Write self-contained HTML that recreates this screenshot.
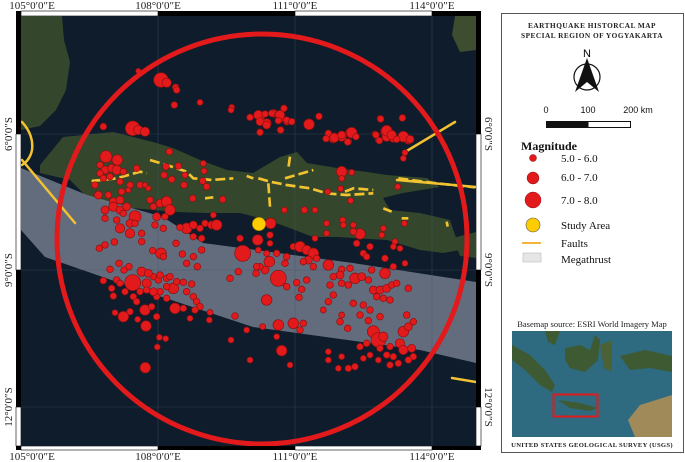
<!DOCTYPE html>
<html><head><meta charset="utf-8"><style>
body{margin:0;width:685px;height:462px;background:#fff;overflow:hidden;font-family:"Liberation Serif",serif}
svg{position:absolute;left:0;top:0}
</style></head><body>
<svg width="685" height="462" viewBox="0 0 685 462" xmlns="http://www.w3.org/2000/svg" font-family="Liberation Serif, serif">
<defs><clipPath id="mc"><rect x="21" y="16" width="455" height="430"/></clipPath></defs>
<rect x="16" y="11" width="465" height="439" fill="#000"/>
<rect x="21" y="11" width="137" height="5" fill="#fff" stroke="#000" stroke-width="0.6"/>
<rect x="295" y="11" width="137" height="5" fill="#fff" stroke="#000" stroke-width="0.6"/>
<rect x="21" y="446" width="137" height="4" fill="#fff" stroke="#000" stroke-width="0.6"/>
<rect x="295" y="446" width="137" height="4" fill="#fff" stroke="#000" stroke-width="0.6"/>
<rect x="16" y="134" width="5" height="136" fill="#fff" stroke="#000" stroke-width="0.6"/>
<rect x="16" y="407" width="5" height="39" fill="#fff" stroke="#000" stroke-width="0.6"/>
<rect x="476" y="134" width="5" height="136" fill="#fff" stroke="#000" stroke-width="0.6"/>
<rect x="476" y="407" width="5" height="39" fill="#fff" stroke="#000" stroke-width="0.6"/>
<g clip-path="url(#mc)">
<rect x="21" y="16" width="455" height="430" fill="#0e1c2b"/>
<polygon fill="#34462b" points="21,16 62,16 64,40 70,62 66,90 56,110 40,126 21,130"/>
<polygon fill="#3e4d30" points="455,16 476,16 476,50 460,52 452,35"/>
<polygon fill="#34462b" points="40,165 63,137 113,132 153,142 173,148 200,160 227,170 253,173 280,157 297,152 307,163 337,168 367,172 387,175 427,178 440,187 403,193 383,198 390,210 420,213 450,220 460,250 443,253 420,250 387,240 337,237 313,237 287,227 267,220 240,213 207,213 177,212 153,210 120,207 87,197 70,180 40,173"/>
<polygon fill="#34462b" points="453,238 476,232 476,258 460,256"/>
<polygon fill="#6c7686" fill-opacity="0.9" points="21,168 87,195 163,217 203,243 353,263 476,282 476,363 420,350 253,327 120,283 45,257 21,230"/>
<g stroke="#44576a" stroke-width="0.6" opacity="0.6">
<line x1="158" y1="16" x2="158" y2="446"/><line x1="295" y1="16" x2="295" y2="446"/><line x1="432" y1="16" x2="432" y2="446"/>
<line x1="21" y1="134" x2="476" y2="134"/><line x1="21" y1="270" x2="476" y2="270"/><line x1="21" y1="407" x2="476" y2="407"/>
</g>
<g stroke="#f2c230" stroke-width="2.5" fill="none" stroke-linecap="round">
<path d="M22,122 Q34,135 32,150 Q30,160 22,165"/>
<path d="M22,160 L75,223"/>
<path d="M397,180 L476,187"/>
<path d="M405,152 L455,122"/>
<path d="M452,378 L476,382"/>
</g>
<g transform="translate(20,110) scale(0.33333)">
<g stroke="#f2c230" stroke-width="8" fill="none" stroke-dasharray="30,12">
<polyline points="215,213 290,205 360,185 380,190"/>
<polyline points="390,150 440,165 500,185 520,205 575,210 640,205"/>
<polyline points="555,265 580,262"/><polyline points="680,198 700,205"/>
<polyline points="715,205 750,215 800,225 870,235 920,250 980,255 1060,250"/>
<polyline points="745,220 750,290"/><polyline points="795,205 880,180"/><polyline points="810,140 805,175"/>
<polyline points="975,245 1000,235 1060,240"/><polyline points="1135,205 1250,220 1365,232"/>
<polyline points="1090,295 1115,305"/><polyline points="1145,325 1165,325"/><polyline points="1280,335 1283,350"/>
</g>
<g fill="#e31a1c" stroke="#8a1010" stroke-width="2">
<circle cx="258" cy="140" r="18"/><circle cx="292" cy="150" r="16"/><circle cx="240" cy="165" r="10"/><circle cx="255" cy="180" r="12"/><circle cx="275" cy="175" r="12"/><circle cx="290" cy="180" r="14"/><circle cx="310" cy="185" r="10"/><circle cx="240" cy="190" r="10"/><circle cx="270" cy="200" r="10"/><circle cx="225" cy="225" r="10"/><circle cx="250" cy="205" r="10"/><circle cx="300" cy="215" r="10"/><circle cx="330" cy="225" r="10"/><circle cx="350" cy="175" r="10"/><circle cx="360" cy="225" r="10"/><circle cx="375" cy="225" r="8"/><circle cx="385" cy="235" r="8"/><circle cx="305" cy="245" r="10"/><circle cx="325" cy="240" r="8"/><circle cx="235" cy="255" r="12"/><circle cx="265" cy="255" r="10"/><circle cx="280" cy="275" r="12"/><circle cx="300" cy="270" r="12"/><circle cx="255" cy="300" r="12"/><circle cx="280" cy="290" r="14"/><circle cx="300" cy="300" r="12"/><circle cx="320" cy="290" r="12"/><circle cx="345" cy="320" r="18"/><circle cx="310" cy="310" r="10"/><circle cx="255" cy="325" r="10"/><circle cx="290" cy="330" r="10"/><circle cx="330" cy="340" r="12"/><circle cx="300" cy="355" r="14"/><circle cx="330" cy="370" r="14"/><circle cx="345" cy="340" r="10"/><circle cx="365" cy="370" r="10"/><circle cx="400" cy="290" r="10"/><circle cx="420" cy="280" r="12"/><circle cx="440" cy="275" r="16"/><circle cx="450" cy="300" r="16"/><circle cx="435" cy="320" r="10"/><circle cx="410" cy="320" r="12"/><circle cx="405" cy="345" r="10"/><circle cx="430" cy="355" r="10"/><circle cx="390" cy="270" r="10"/><circle cx="448" cy="125" r="10"/><circle cx="475" cy="168" r="10"/><circle cx="438" cy="170" r="10"/><circle cx="550" cy="160" r="9"/><circle cx="552" cy="183" r="9"/><circle cx="432" cy="195" r="10"/><circle cx="455" cy="208" r="10"/><circle cx="495" cy="195" r="9"/><circle cx="492" cy="225" r="10"/><circle cx="548" cy="213" r="10"/><circle cx="560" cy="230" r="10"/><circle cx="518" cy="265" r="10"/><circle cx="608" cy="268" r="10"/><circle cx="500" cy="355" r="16"/><circle cx="520" cy="345" r="12"/><circle cx="540" cy="355" r="10"/><circle cx="555" cy="340" r="10"/><circle cx="545" cy="385" r="10"/><circle cx="575" cy="345" r="12"/><circle cx="580" cy="315" r="9"/><circle cx="590" cy="345" r="16"/><circle cx="480" cy="352" r="10"/><circle cx="520" cy="380" r="10"/>
<circle cx="752" cy="340" r="16"/><circle cx="713" cy="390" r="16"/><circle cx="750" cy="375" r="10"/><circle cx="660" cy="385" r="10"/><circle cx="668" cy="430" r="24"/><circle cx="715" cy="420" r="9"/><circle cx="740" cy="430" r="9"/><circle cx="748" cy="455" r="16"/><circle cx="735" cy="480" r="12"/><circle cx="775" cy="505" r="24"/><circle cx="800" cy="530" r="10"/><circle cx="795" cy="460" r="10"/><circle cx="770" cy="430" r="10"/><circle cx="800" cy="440" r="10"/><circle cx="820" cy="410" r="10"/><circle cx="840" cy="410" r="16"/><circle cx="860" cy="420" r="14"/><circle cx="880" cy="430" r="16"/><circle cx="865" cy="450" r="12"/><circle cx="890" cy="445" r="10"/><circle cx="850" cy="455" r="10"/><circle cx="925" cy="465" r="16"/><circle cx="880" cy="470" r="10"/><circle cx="885" cy="385" r="9"/><circle cx="920" cy="370" r="9"/><circle cx="920" cy="340" r="9"/><circle cx="968" cy="330" r="9"/><circle cx="970" cy="345" r="9"/><circle cx="1000" cy="345" r="9"/><circle cx="1020" cy="372" r="16"/><circle cx="1000" cy="365" r="10"/><circle cx="1010" cy="400" r="10"/><circle cx="1050" cy="410" r="10"/><circle cx="1030" cy="430" r="10"/><circle cx="1040" cy="440" r="10"/><circle cx="1090" cy="355" r="9"/><circle cx="1085" cy="375" r="9"/><circle cx="1125" cy="395" r="9"/><circle cx="1120" cy="410" r="9"/><circle cx="1140" cy="415" r="9"/><circle cx="1095" cy="445" r="10"/><circle cx="1095" cy="490" r="16"/><circle cx="1120" cy="470" r="10"/><circle cx="1155" cy="460" r="9"/><circle cx="1005" cy="505" r="16"/><circle cx="1025" cy="500" r="12"/><circle cx="1045" cy="510" r="10"/><circle cx="1055" cy="480" r="10"/><circle cx="990" cy="475" r="10"/><circle cx="965" cy="478" r="10"/><circle cx="960" cy="495" r="12"/><circle cx="940" cy="500" r="10"/><circle cx="930" cy="525" r="10"/><circle cx="965" cy="520" r="10"/><circle cx="985" cy="525" r="10"/><circle cx="1060" cy="540" r="12"/><circle cx="1080" cy="540" r="12"/><circle cx="1100" cy="535" r="12"/><circle cx="1115" cy="525" r="10"/><circle cx="1070" cy="560" r="10"/><circle cx="1090" cy="565" r="10"/><circle cx="1110" cy="570" r="10"/><circle cx="1130" cy="520" r="10"/><circle cx="1165" cy="535" r="10"/><circle cx="1030" cy="585" r="10"/><circle cx="1050" cy="600" r="10"/><circle cx="1080" cy="620" r="10"/><circle cx="1020" cy="615" r="10"/><circle cx="1000" cy="580" r="10"/><circle cx="965" cy="615" r="9"/><circle cx="960" cy="635" r="10"/><circle cx="940" cy="555" r="10"/><circle cx="925" cy="575" r="10"/><circle cx="910" cy="600" r="9"/><circle cx="983" cy="655" r="10"/><circle cx="1045" cy="632" r="10"/><circle cx="1060" cy="665" r="18"/><circle cx="1075" cy="690" r="22"/><circle cx="1090" cy="680" r="14"/><circle cx="1040" cy="700" r="10"/><circle cx="1020" cy="710" r="10"/><circle cx="1080" cy="715" r="10"/><circle cx="1050" cy="735" r="9"/><circle cx="1030" cy="745" r="9"/><circle cx="1075" cy="750" r="9"/><circle cx="1100" cy="735" r="10"/><circle cx="1110" cy="710" r="10"/><circle cx="1150" cy="665" r="16"/><circle cx="1165" cy="650" r="12"/><circle cx="1160" cy="615" r="10"/><circle cx="1180" cy="635" r="10"/><circle cx="1140" cy="700" r="14"/><circle cx="1150" cy="720" r="14"/><circle cx="1175" cy="715" r="12"/><circle cx="1180" cy="740" r="10"/><circle cx="1165" cy="750" r="10"/><circle cx="1120" cy="740" r="10"/><circle cx="1110" cy="765" r="10"/><circle cx="1135" cy="760" r="10"/><circle cx="1005" cy="770" r="10"/><circle cx="985" cy="775" r="10"/><circle cx="965" cy="740" r="9"/><circle cx="925" cy="725" r="9"/><circle cx="925" cy="750" r="9"/><circle cx="955" cy="775" r="9"/><circle cx="810" cy="765" r="9"/><circle cx="785" cy="722" r="16"/><circle cx="770" cy="680" r="9"/><circle cx="775" cy="645" r="16"/><circle cx="820" cy="640" r="16"/><circle cx="850" cy="640" r="10"/><circle cx="840" cy="660" r="10"/><circle cx="728" cy="650" r="9"/><circle cx="680" cy="660" r="9"/><circle cx="690" cy="750" r="9"/><circle cx="633" cy="690" r="9"/><circle cx="645" cy="618" r="10"/><circle cx="740" cy="570" r="16"/><circle cx="720" cy="470" r="10"/><circle cx="708" cy="490" r="10"/><circle cx="750" cy="400" r="9"/><circle cx="837" cy="562" r="10"/><circle cx="845" cy="538" r="10"/><circle cx="860" cy="510" r="10"/><circle cx="830" cy="518" r="10"/><circle cx="710" cy="470" r="10"/>
<circle cx="630" cy="505" r="10"/><circle cx="655" cy="485" r="10"/><circle cx="545" cy="420" r="10"/><circle cx="520" cy="440" r="10"/><circle cx="532" cy="470" r="10"/><circle cx="500" cy="460" r="10"/><circle cx="487" cy="432" r="10"/><circle cx="468" cy="400" r="10"/><circle cx="423" cy="430" r="16"/><circle cx="430" cy="440" r="10"/><circle cx="398" cy="422" r="10"/><circle cx="365" cy="395" r="10"/><circle cx="283" cy="396" r="10"/><circle cx="255" cy="405" r="10"/><circle cx="238" cy="415" r="10"/><circle cx="270" cy="478" r="10"/><circle cx="297" cy="460" r="10"/><circle cx="312" cy="480" r="10"/><circle cx="327" cy="470" r="10"/><circle cx="250" cy="512" r="10"/><circle cx="290" cy="510" r="10"/><circle cx="338" cy="518" r="24"/><circle cx="300" cy="520" r="10"/><circle cx="275" cy="535" r="10"/><circle cx="315" cy="545" r="10"/><circle cx="280" cy="558" r="10"/><circle cx="340" cy="560" r="10"/><circle cx="350" cy="575" r="10"/><circle cx="375" cy="600" r="16"/><circle cx="395" cy="590" r="10"/><circle cx="410" cy="560" r="10"/><circle cx="420" cy="545" r="10"/><circle cx="440" cy="565" r="10"/><circle cx="380" cy="520" r="14"/><circle cx="400" cy="500" r="10"/><circle cx="415" cy="510" r="10"/><circle cx="440" cy="505" r="10"/><circle cx="460" cy="535" r="16"/><circle cx="470" cy="515" r="10"/><circle cx="490" cy="517" r="10"/><circle cx="515" cy="522" r="10"/><circle cx="500" cy="545" r="10"/><circle cx="520" cy="560" r="10"/><circle cx="530" cy="575" r="10"/><circle cx="540" cy="590" r="10"/><circle cx="525" cy="600" r="10"/><circle cx="465" cy="595" r="16"/><circle cx="490" cy="595" r="10"/><circle cx="410" cy="620" r="10"/><circle cx="380" cy="540" r="10"/><circle cx="365" cy="485" r="14"/><circle cx="385" cy="490" r="12"/><circle cx="420" cy="495" r="10"/><circle cx="450" cy="500" r="10"/><circle cx="440" cy="530" r="10"/><circle cx="400" cy="545" r="12"/><circle cx="360" cy="545" r="10"/><circle cx="330" cy="605" r="10"/><circle cx="310" cy="620" r="16"/><circle cx="285" cy="608" r="9"/><circle cx="353" cy="628" r="9"/><circle cx="378" cy="648" r="16"/><circle cx="418" cy="682" r="9"/><circle cx="437" cy="686" r="9"/><circle cx="412" cy="711" r="9"/><circle cx="376" cy="773" r="16"/><circle cx="510" cy="625" r="9"/><circle cx="570" cy="607" r="9"/><circle cx="568" cy="630" r="9"/>
<circle cx="338" cy="55" r="22"/><circle cx="355" cy="60" r="14"/><circle cx="375" cy="65" r="14"/><circle cx="250" cy="48" r="9"/><circle cx="1100" cy="65" r="18"/><circle cx="1100" cy="80" r="14"/><circle cx="1150" cy="80" r="16"/><circle cx="1165" cy="90" r="12"/><circle cx="1120" cy="85" r="12"/><circle cx="1075" cy="90" r="9"/><circle cx="1065" cy="72" r="9"/><circle cx="1155" cy="128" r="9"/><circle cx="1150" cy="145" r="9"/><circle cx="990" cy="68" r="14"/><circle cx="965" cy="80" r="14"/><circle cx="940" cy="85" r="14"/><circle cx="920" cy="85" r="10"/><circle cx="985" cy="95" r="10"/><circle cx="965" cy="185" r="16"/><circle cx="995" cy="187" r="9"/><circle cx="965" cy="205" r="9"/><circle cx="923" cy="245" r="9"/><circle cx="962" cy="236" r="9"/><circle cx="992" cy="272" r="9"/><circle cx="1133" cy="230" r="9"/><circle cx="793" cy="300" r="9"/><circle cx="853" cy="300" r="10"/><circle cx="885" cy="300" r="9"/><circle cx="1153" cy="340" r="9"/><circle cx="867" cy="43" r="16"/><circle cx="897" cy="20" r="9"/><circle cx="1080" cy="25" r="9"/><circle cx="1148" cy="22" r="9"/><circle cx="720" cy="65" r="9"/><circle cx="780" cy="60" r="9"/><circle cx="720" cy="20" r="14"/><circle cx="740" cy="40" r="14"/><circle cx="760" cy="10" r="12"/><circle cx="780" cy="25" r="12"/><circle cx="800" cy="35" r="10"/><circle cx="815" cy="35" r="10"/>
</g>
<circle cx="717" cy="342" r="20" fill="#ffcc00" stroke="#a07800" stroke-width="2"/>
</g>
<g transform="scale(0.33333)" fill="#e31a1c" stroke="#8a1010" stroke-width="2">
<circle cx="483" cy="240" r="22"/><circle cx="500" cy="248" r="14"/><circle cx="527" cy="262" r="10"/><circle cx="530" cy="270" r="10"/><circle cx="523" cy="315" r="10"/><circle cx="600" cy="307" r="9"/><circle cx="695" cy="322" r="9"/><circle cx="693" cy="330" r="9"/><circle cx="415" cy="213" r="8"/><circle cx="310" cy="380" r="10"/>
</g>
<g transform="translate(240,20) scale(0.33333)" fill="#e31a1c" stroke="#8a1010" stroke-width="2">
<circle cx="30" cy="292" r="10"/><circle cx="55" cy="285" r="14"/><circle cx="75" cy="282" r="10"/><circle cx="95" cy="280" r="10"/><circle cx="60" cy="305" r="12"/><circle cx="80" cy="315" r="12"/><circle cx="120" cy="285" r="14"/><circle cx="132" cy="265" r="10"/><circle cx="140" cy="300" r="10"/><circle cx="155" cy="305" r="10"/><circle cx="115" cy="302" r="10"/><circle cx="60" cy="337" r="10"/><circle cx="122" cy="330" r="10"/><circle cx="207" cy="313" r="16"/><circle cx="237" cy="289" r="10"/>
<circle cx="265" cy="340" r="10"/><circle cx="258" cy="356" r="10"/><circle cx="283" cy="353" r="14"/><circle cx="305" cy="345" r="12"/><circle cx="335" cy="338" r="16"/><circle cx="348" cy="350" r="10"/><circle cx="323" cy="366" r="10"/><circle cx="422" cy="297" r="10"/><circle cx="487" cy="294" r="10"/><circle cx="440" cy="332" r="16"/><circle cx="455" cy="345" r="14"/><circle cx="408" cy="345" r="10"/><circle cx="418" cy="362" r="10"/><circle cx="490" cy="350" r="16"/><circle cx="510" cy="358" r="12"/><circle cx="470" cy="358" r="10"/>
</g>
<circle cx="262" cy="239" r="205" fill="none" stroke="#e31a1c" stroke-width="5"/>
</g>
<g font-size="11" fill="#222" text-anchor="middle">
<text x="32" y="9">105°0′0″E</text><text x="158" y="9">108°0′0″E</text><text x="295" y="9">111°0′0″E</text><text x="432" y="9">114°0′0″E</text>
<text x="32" y="460">105°0′0″E</text><text x="158" y="460">108°0′0″E</text><text x="295" y="460">111°0′0″E</text><text x="432" y="460">114°0′0″E</text>
<text transform="translate(12,134) rotate(-90)">6°0′0″S</text><text transform="translate(12,270) rotate(-90)">9°0′0″S</text><text transform="translate(12,407) rotate(-90)">12°0′0″S</text>
<text transform="translate(485,134) rotate(90)">6°0′0″S</text><text transform="translate(485,270) rotate(90)">9°0′0″S</text><text transform="translate(485,407) rotate(90)">12°0′0″S</text>
</g>
<rect x="501.5" y="13.5" width="182" height="439" fill="#fff" stroke="#555" stroke-width="1"/>
<g font-weight="bold" font-size="7.3" text-anchor="middle" fill="#222" letter-spacing="0.5">
<text x="592" y="28">EARTHQUAKE HISTORCAL MAP</text><text x="592" y="38">SPECIAL REGION OF YOGYAKARTA</text>
</g>
<text x="587" y="57" font-family="Liberation Sans, sans-serif" font-size="11" text-anchor="middle">N</text>
<circle cx="587" cy="77" r="13" fill="none" stroke="#111" stroke-width="1.2"/>
<polygon points="587,58 575,92 587,82" fill="#111"/><polygon points="587,58 599,92 587,82" fill="#111"/>
<g font-family="Liberation Sans, sans-serif" font-size="9" fill="#111" text-anchor="middle">
<text x="546" y="113">0</text><text x="588" y="113">100</text><text x="638" y="113">200 km</text>
</g>
<rect x="546.5" y="121.5" width="84" height="6" fill="#fff" stroke="#111"/><rect x="546.5" y="121.5" width="42" height="6" fill="#111"/>
<text x="521" y="150" font-size="12" font-weight="bold" fill="#111">Magnitude</text>
<circle cx="533" cy="158" r="3.5" fill="#e31a1c" stroke="#8a1010" stroke-width="0.5"/>
<circle cx="533" cy="178" r="6" fill="#e31a1c" stroke="#8a1010" stroke-width="0.5"/>
<circle cx="533" cy="200" r="8" fill="#e31a1c" stroke="#8a1010" stroke-width="0.5"/>
<circle cx="533" cy="225" r="7" fill="#ffcc00" stroke="#555" stroke-width="0.6"/>
<line x1="522" y1="243" x2="541" y2="243" stroke="#f2b43a" stroke-width="2"/>
<rect x="523" y="253" width="18" height="9" fill="#e6e6e6" stroke="#bbb" stroke-width="0.6"/>
<g font-size="11" fill="#111">
<text x="561" y="162">5.0 - 6.0</text><text x="561" y="181">6.0 - 7.0</text><text x="561" y="204">7.0 - 8.0</text>
<text x="561" y="229">Study Area</text><text x="561" y="247">Faults</text><text x="561" y="263">Megathrust</text>
</g>
<text x="592" y="327" font-size="8.5" text-anchor="middle" fill="#222">Basemap source: ESRI World Imagery Map</text>
<rect x="512" y="331" width="160" height="106" fill="#2e6a80"/>
<polygon fill="#3e5a32" points="512,345 530,355 545,370 555,385 552,392 540,385 525,370 512,360"/>
<polygon fill="#3e5a32" points="565,348 580,345 590,350 595,335 600,340 598,360 585,372 570,368 565,360"/>
<polygon fill="#3e5a32" points="545,331 560,331 555,345 548,342"/>
<polygon fill="#4a6235" points="600,345 612,340 612,372 604,368"/>
<polygon fill="#3e5a32" points="620,356 645,350 672,356 672,372 650,368 630,370"/>
<polygon fill="#3e5a32" points="558,400 580,403 597,408 590,411 570,408"/>
<polygon fill="#a08a5a" points="640,405 672,395 672,437 635,437 628,420"/>
<rect x="553.5" y="394.5" width="44" height="22" fill="none" stroke="#e31a1c" stroke-width="2"/>
<text x="592" y="447" font-size="6.6" font-weight="bold" text-anchor="middle" fill="#222" letter-spacing="0.3">UNITED STATES GEOLOGICAL SURVEY (USGS)</text>
</svg>
</body></html>
